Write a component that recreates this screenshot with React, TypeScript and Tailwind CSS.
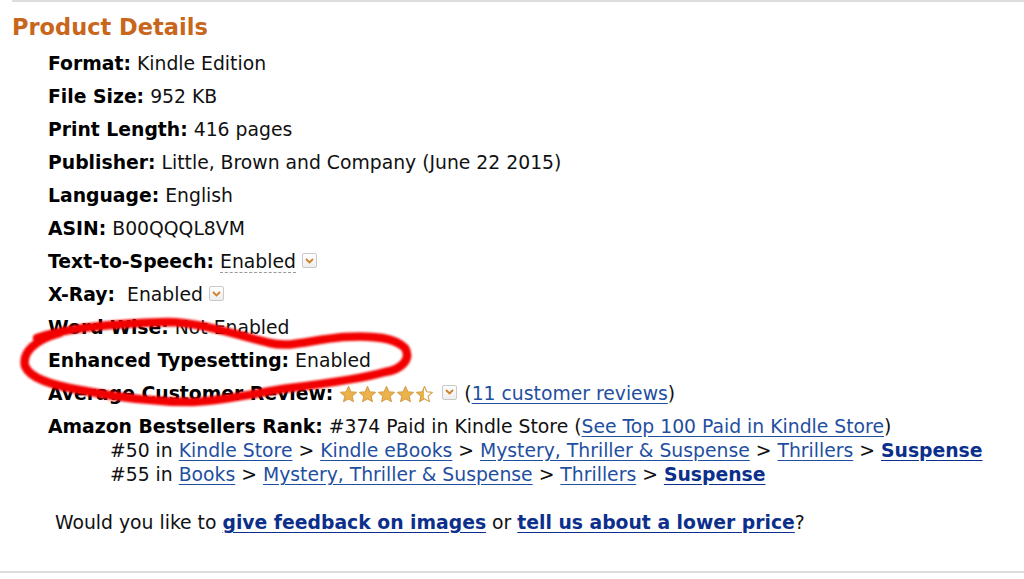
import type { ReactNode } from 'react'

function DropDown() {
  return (
    <span className="relative -top-[2px] inline-flex h-[15px] w-[15px] items-center justify-center rounded-[2px] border border-[#c9c9c9] bg-gradient-to-b from-white to-[#eeeeee] align-middle">
      <svg width="9" height="6" viewBox="0 0 9 6">
        <path d="M1 1 L4.5 4.5 L8 1" fill="none" stroke="#d0822a" strokeWidth="1.8" />
      </svg>
    </span>
  )
}

function Star({ half = false }: { half?: boolean }) {
  const id = half ? 'sh' : 'sf'
  return (
    <svg width="19" height="19" viewBox="0 0 24 24">
      <defs>
        <linearGradient id={id} x1="0" x2="1" y1="0" y2="0">
          <stop offset={half ? '50%' : '100%'} stopColor="#eeb24a" />
          <stop offset={half ? '50%' : '100%'} stopColor="#ffffff" />
        </linearGradient>
      </defs>
      <path
        d="M12 2 L14.9 8.6 L22 9.3 L16.6 14 L18.2 21 L12 17.3 L5.8 21 L7.4 14 L2 9.3 L9.1 8.6 Z"
        fill={`url(#${id})`}
        stroke="#d6a04a"
        strokeWidth="1.4"
        strokeLinejoin="round"
      />
    </svg>
  )
}

function A({ children, bold = false }: { children: ReactNode; bold?: boolean }) {
  return (
    <a
      href="#"
      className={
        bold
          ? 'font-bold text-[#0c2f8c] underline underline-offset-[3px]'
          : 'text-[#1f4fa0] underline underline-offset-[3px]'
      }
    >
      {children}
    </a>
  )
}

function Row({ label, children }: { label: string; children: ReactNode }) {
  return (
    <li className="mb-[9px] leading-[24px]">
      <b className="text-black">{label}</b> {children}
    </li>
  )
}

export default function App() {
  return (
    <div className="relative h-[579px] w-[1024px] overflow-hidden bg-white font-['DejaVu_Sans',Verdana,sans-serif] text-[#111]">
      <div className="ml-3 h-[2px] bg-[#dddddd]" />
      <h2 className="ml-3 mt-[11px] text-[22.5px] font-bold leading-[28px] text-[#c8661b]">
        Product Details
      </h2>

      <ul className="mt-[11px] pl-[48px] text-[18.8px]">
        <Row label="Format:">Kindle Edition</Row>
        <Row label="File Size:">952 KB</Row>
        <Row label="Print Length:">416 pages</Row>
        <Row label="Publisher:">Little, Brown and Company (June 22 2015)</Row>
        <Row label="Language:">English</Row>
        <Row label="ASIN:">B00QQQL8VM</Row>
        <Row label="Text-to-Speech:">
          <span className="border-b border-dashed border-[#999]">Enabled</span> <DropDown />
        </Row>
        <Row label="X-Ray:">
          {'\u00a0'}Enabled <DropDown />
        </Row>
        <Row label="Word Wise:">Not Enabled</Row>
        <Row label="Enhanced Typesetting:">Enabled</Row>
        <li className="mb-[9px] flex items-center leading-[24px]">
          <b className="text-black">Average Customer Review:</b>
          <span className="ml-[6px] flex items-center">
            <Star />
            <Star />
            <Star />
            <Star />
            <Star half />
          </span>
          <span className="ml-[8px] flex items-center">
            <DropDown />
          </span>
          <span className="ml-[7px]">
            (<A>11 customer reviews</A>)
          </span>
        </li>
        <li className="leading-[24px]">
          <b className="text-black">Amazon Bestsellers Rank:</b> #374 Paid in Kindle Store (
          <A>See Top 100 Paid in Kindle Store</A>)
          <div className="pl-[62px]">
            #50 in <A>Kindle Store</A> &gt; <A>Kindle eBooks</A> &gt; <A>Mystery, Thriller &amp; Suspense</A> &gt;{' '}
            <A>Thrillers</A> &gt; <A bold>Suspense</A>
          </div>
          <div className="pl-[62px]">
            #55 in <A>Books</A> &gt; <A>Mystery, Thriller &amp; Suspense</A> &gt; <A>Thrillers</A> &gt;{' '}
            <A bold>Suspense</A>
          </div>
        </li>
      </ul>

      <p className="mt-[24px] pl-[55px] text-[18.8px] leading-[24px]">
        Would you like to <A bold>give feedback on images</A> or <A bold>tell us about a lower price</A>?
      </p>

      <div className="mt-[36px] h-[2px] bg-[#dddddd]" />

      <svg className="pointer-events-none absolute left-0 top-0" width="1024" height="579" viewBox="0 0 1024 579">
        <defs>
          <filter id="soft">
            <feGaussianBlur stdDeviation="0.8" />
          </filter>
        </defs>
        <path
          d="M37 338 C 60 330, 100 324, 167 322 C 200 322, 240 336, 270 343 C 290 348, 310 340, 343 337 C 375 335, 395 338, 405 348 C 412 360, 400 370, 385 372 C 365 378, 330 383, 290 388 C 260 392, 230 400, 193 402 C 150 402, 110 396, 80 390 C 50 385, 30 378, 25 366 C 22 352, 35 340, 60 333"
          fill="none"
          stroke="#f20000"
          strokeWidth="8.5"
          strokeLinecap="round"
          strokeLinejoin="round"
          filter="url(#soft)"
        />
      </svg>
    </div>
  )
}
